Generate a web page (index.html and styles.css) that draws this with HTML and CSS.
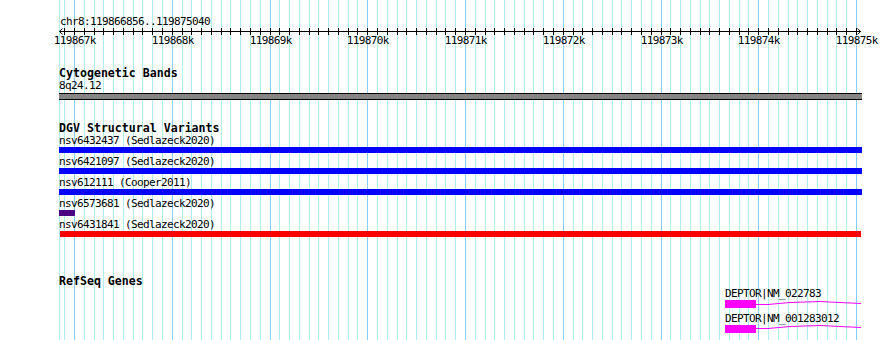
FILE: index.html
```html
<!DOCTYPE html>
<html lang="en">
<head>
    <meta charset="UTF-8">
    <meta name="viewport" content="width=device-width, initial-scale=1.0">
    <title>chr8:119866856..119875040</title>
    <link rel="stylesheet" href="styles.css">
</head>
<body>
    <div class="browser">
        <!-- grid lines are drawn by the script below -->
        <svg id="grid" class="grid" width="890" height="340"></svg>

        <svg id="ruler" class="ruler" width="890" height="48">
            <text class="range" x="60" y="25">chr8:119866856..119875040</text>
            <line class="axis" x1="59" y1="31.5" x2="861" y2="31.5"/>
            <polyline class="axis" points="62.5,28.5 59.5,31.5 62.5,34.5"/>
            <polyline class="axis" points="857.5,28.5 860.5,31.5 857.5,34.5"/>
            <g id="ticks"></g>
        </svg>

        <div class="track cyto-track">
            <div class="track-title">Cytogenetic Bands</div>
            <div class="feature-label">8q24.12</div>
            <div class="band"></div>
        </div>

        <div class="track dgv-track">
            <div class="track-title">DGV Structural Variants</div>
            <div class="variant">
                <div class="feature-label">nsv6432437 (Sedlazeck2020)</div>
                <div class="variant-bar gain" style="width: 803px"></div>
            </div>
            <div class="variant">
                <div class="feature-label">nsv6421097 (Sedlazeck2020)</div>
                <div class="variant-bar gain" style="width: 803px"></div>
            </div>
            <div class="variant">
                <div class="feature-label">nsv612111 (Cooper2011)</div>
                <div class="variant-bar gain" style="width: 803px"></div>
            </div>
            <div class="variant">
                <div class="feature-label">nsv6573681 (Sedlazeck2020)</div>
                <div class="variant-bar complex" style="width: 16px"></div>
            </div>
            <div class="variant">
                <div class="feature-label">nsv6431841 (Sedlazeck2020)</div>
                <div class="variant-bar loss" style="margin-left: 1px; width: 801px"></div>
            </div>
        </div>

        <div class="track refseq-track">
            <div class="track-title">RefSeq Genes</div>
            <div class="gene" style="margin-left: 666px">
                <div class="feature-label">DEPTOR|NM_022783</div>
                <div class="transcript">
                    <div class="exon" style="width: 31px"></div>
                    <svg class="intron" width="105" height="8">
                        <polyline points="0,4.5 12,4.5 34,2.5 64,1.5 84,2.5 105,3.5"/>
                    </svg>
                </div>
            </div>
            <div class="gene" style="margin-left: 666px">
                <div class="feature-label">DEPTOR|NM_001283012</div>
                <div class="transcript">
                    <div class="exon" style="width: 31px"></div>
                    <svg class="intron" width="105" height="8">
                        <polyline points="0,3.5 12,3.5 34,1.5 64,0.5 84,1.5 105,2.5"/>
                    </svg>
                </div>
            </div>
        </div>
    </div>

    <script>
        document.addEventListener('DOMContentLoaded', () => {
            // 119867k sits at x=74, 1000bp is 97.75px
            const refBase = 119867000;
            const refX = 74;
            const scale = 0.09775;
            const toX = bp => Math.round(refX + (bp - refBase) * scale) + 0.5;

            const ns = 'http://www.w3.org/2000/svg';
            const grid = document.getElementById('grid');
            const ticks = document.getElementById('ticks');

            function addLine(parent, x, y1, y2, cls) {
                const line = document.createElementNS(ns, 'line');
                line.setAttribute('x1', x);
                line.setAttribute('x2', x);
                line.setAttribute('y1', y1);
                line.setAttribute('y2', y2);
                line.setAttribute('class', cls);
                parent.appendChild(line);
            }

            // left edge of the view
            addLine(grid, 59.5, 0, 340, 'minor');

            for (let bp = 119866900; bp <= 119875000; bp += 100) {
                const x = toX(bp);
                const major = bp % 1000 === 0;
                addLine(grid, x, 0, 340, major ? 'major' : 'minor');
                addLine(ticks, x, 28, 35, 'tick');

                if (major) {
                    const label = document.createElementNS(ns, 'text');
                    label.setAttribute('x', x + 0.3);
                    label.setAttribute('y', 44);
                    label.setAttribute('class', 'tick-label');
                    label.textContent = (bp / 1000) + 'k';
                    ticks.appendChild(label);
                }
            }
        });
    </script>
</body>
</html>
```

FILE: styles.css
```css
body {
    margin: 0;
    background-color: #ffffff;
    color: #000;
    font-family: "DejaVu Sans Mono", monospace;
}

.browser {
    position: relative;
    width: 890px;
    height: 340px;
    overflow: hidden;
}

.grid {
    position: absolute;
    top: 0;
    left: 0;
}

.grid .minor {
    stroke: #afeeee;
    stroke-width: 1;
}

.grid .major {
    stroke: #87cefa;
    stroke-width: 1;
}

.ruler {
    display: block;
    position: relative;
}

.ruler text {
    font-family: "DejaVu Sans Mono", monospace;
    font-size: 11px;
    letter-spacing: -0.62px;
    fill: #000;
}

.ruler .tick-label {
    text-anchor: middle;
}

.axis {
    stroke: #000;
    stroke-width: 1;
    fill: none;
}

.tick {
    stroke: #000;
    stroke-width: 1;
}

.track {
    position: relative;
    width: 803px;
    padding-left: 59px;
}

.track-title {
    padding-top: 1px;
    font-weight: bold;
    font-size: 11.6px;
    line-height: 12px;
    white-space: nowrap;
}

.feature-label {
    padding-top: 1px;
    font-size: 11px;
    letter-spacing: -0.62px;
    line-height: 12px;
    white-space: nowrap;
}

/* cytogenetic bands */
.cyto-track {
    margin-top: 18px;
}

.band {
    height: 5px;
    margin-top: 1px;
    background-color: #858585;
    border-top: 1px solid #000;
    border-bottom: 1px solid #000;
}

/* DGV */
.dgv-track {
    margin-top: 21px;
}

.variant-bar {
    height: 6px;
    margin-bottom: 2px;
}

.variant-bar.gain {
    background-color: #0000ff;
}

.variant-bar.loss {
    background-color: #ff0000;
}

.variant-bar.complex {
    background-color: #4b0082;
}

/* RefSeq */
.refseq-track {
    margin-top: 37px;
}

.gene {
    display: flex;
    flex-direction: column;
}

.transcript {
    display: flex;
    height: 8px;
    margin-bottom: 4px;
}

.exon {
    background-color: #ff00ff;
}

.intron polyline {
    fill: none;
    stroke: #ff00ff;
    stroke-width: 1;
}
```
